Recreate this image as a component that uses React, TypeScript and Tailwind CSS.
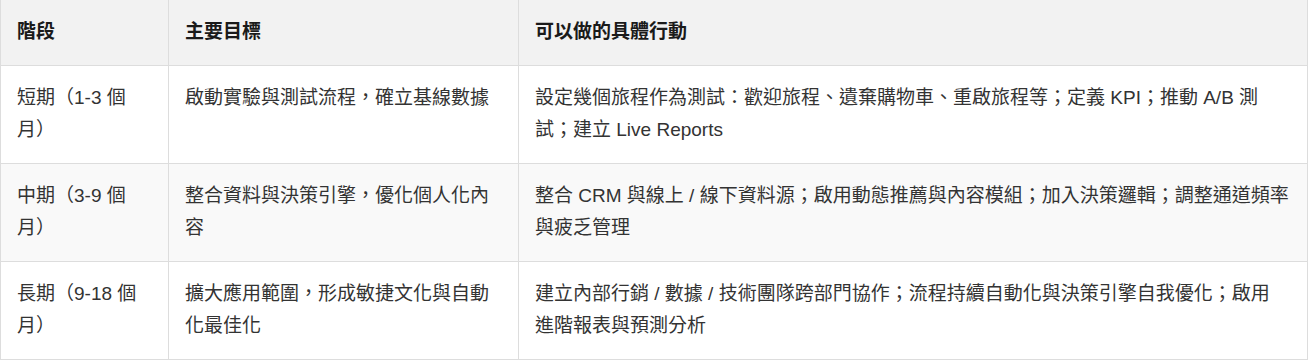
import type { ReactNode } from "react";

const rows: { stage: string; goal: string; actions: ReactNode }[] = [
  {
    stage: "短期（1-3 個月）",
    goal: "啟動實驗與測試流程，確立基線數據",
    actions: "設定幾個旅程作為測試：歡迎旅程、遺棄購物車、重啟旅程等；定義 KPI；推動 A/B 測試；建立 Live Reports",
  },
  {
    stage: "中期（3-9 個月）",
    goal: "整合資料與決策引擎，優化個人化內容",
    actions: "整合 CRM 與線上 / 線下資料源；啟用動態推薦與內容模組；加入決策邏輯；調整通道頻率與疲乏管理",
  },
  {
    stage: "長期（9-18 個月）",
    goal: "擴大應用範圍，形成敏捷文化與自動化最佳化",
    actions: (
      <>
        建立內部行銷 / 數據 / 技術團隊跨部門協作；流程持續自動化與決策引擎自我優化；啟用
        <span className="whitespace-nowrap">進階</span>報表與預測分析
      </>
    ),
  },
];

export default function App() {
  return (
    <div className="w-[1310px] h-[363px] overflow-hidden bg-white font-['Liberation_Sans','Noto_Sans_CJK_TC',sans-serif] text-[19px] leading-[32px]">
      <table className="w-[1308px] table-fixed border-collapse">
        <colgroup>
          <col className="w-[168px]" />
          <col className="w-[350px]" />
          <col />
        </colgroup>
        <thead>
          <tr className="bg-[#f2f2f2]">
            {["階段", "主要目標", "可以做的具體行動"].map((h) => (
              <th
                key={h}
                className="border-x border-b border-[#dddddd] px-4 pt-4 pb-[17px] text-left font-bold text-[#1a1a1a] align-top"
              >
                {h}
              </th>
            ))}
          </tr>
        </thead>
        <tbody>
          {rows.map((r, i) => (
            <tr key={r.stage} className={i === 1 ? "bg-[#f9f9f9]" : "bg-white"}>
              <td className="border border-[#dddddd] px-4 pt-4 pb-[17px] align-top text-[#333333]">{r.stage}</td>
              <td className="border border-[#dddddd] px-4 pt-4 pb-[17px] align-top text-[#333333]">{r.goal}</td>
              <td className="border border-[#dddddd] px-4 pt-4 pb-[17px] align-top text-[#333333]">{r.actions}</td>
            </tr>
          ))}
        </tbody>
      </table>
    </div>
  );
}
